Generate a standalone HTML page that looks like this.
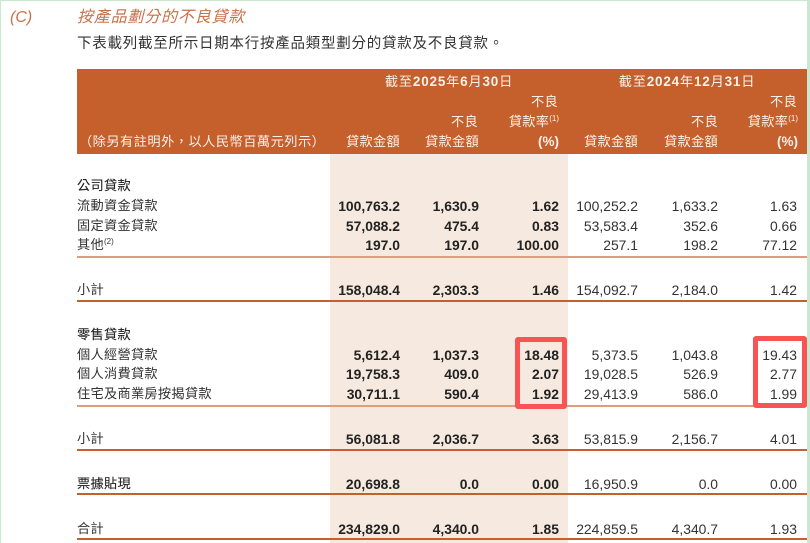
<!DOCTYPE html>
<html lang="zh-Hant">
<head>
<meta charset="utf-8">
<title>按產品劃分的不良貸款</title>
<style>
html,body{margin:0;padding:0;background:#fff}
#p{position:relative;width:810px;height:543px;overflow:hidden;background:#fff;font-family:"Liberation Sans","Noto Sans CJK TC",sans-serif;color:#2b2b2b}
#p div{position:absolute;white-space:nowrap}
.l,.h,.n,.b{height:20px;line-height:20px}
.l{left:77px;font-size:13.2px;letter-spacing:.3px;color:#333}
.bl{color:#222;-webkit-text-stroke:.1px #222}
.n,.b{width:90px;text-align:right;font-size:13.9px}
.n{color:#333}
.b{font-weight:bold;color:#222}
.c1{left:310px}.c2{left:389px}.c3{left:469px}.c4{left:548px}.c5{left:628px}.c6{left:707px}
.h{width:110px;text-align:right;color:#fbf1ea;font-size:13.2px;letter-spacing:.3px}
.ln{left:77px;width:730px}
.t{height:2px;background:#df9d80}
.k{height:2px;background:#c55f2b}
sup{font-size:8px;line-height:0;vertical-align:5px;letter-spacing:0}
.r{box-sizing:border-box;border:5px solid #f95454;border-radius:3px}
</style>
</head>
<body>
<div id="p">
<div style="left:0;top:0;width:810px;height:1px;background:#c8e8d0"></div>
<div style="left:0;top:0;width:1px;height:543px;background:#c8e8d0"></div>
<div style="left:807px;top:0;width:3px;height:543px;background:#c8e8d0"></div>

<div style="left:10px;top:8px;height:20px;line-height:20px;font-size:16px;font-style:italic;color:#c9714a">(C)</div>
<div style="left:77px;top:7px;height:22px;line-height:22px;font-size:16px;letter-spacing:.8px;font-style:italic;color:#c9714a">按產品劃分的不良貸款</div>
<div style="left:77px;top:33px;height:22px;line-height:22px;font-size:14.5px;letter-spacing:.75px;color:#333">下表載列截至所示日期本行按產品類型劃分的貸款及不良貸款。</div>

<div style="left:77px;top:69px;width:730px;height:85px;background:#c5602c"></div>
<div style="left:330px;top:154px;width:238px;height:389px;background:#f6eae0"></div>

<div class="h" style="left:359px;top:72px;width:180px;text-align:center;letter-spacing:.8px">截至<b style="font-size:13.5px">2025</b>年<b style="font-size:13.5px">6</b>月<b style="font-size:13.5px">30</b>日</div>
<div class="h" style="left:597px;top:72px;width:180px;text-align:center;letter-spacing:.8px">截至<b style="font-size:13.5px">2024</b>年<b style="font-size:13.5px">12</b>月<b style="font-size:13.5px">31</b>日</div>
<div class="h" style="left:448px;top:92px">不良</div>
<div class="h" style="left:687px;top:92px">不良</div>
<div class="h" style="left:368px;top:112px">不良</div>
<div class="h" style="left:449px;top:112px">貸款率<sup>(1)</sup></div>
<div class="h" style="left:608px;top:112px">不良</div>
<div class="h" style="left:688px;top:112px">貸款率<sup>(1)</sup></div>
<div class="h" style="left:79px;top:132px;width:250px;text-align:left;letter-spacing:.5px">（除另有註明外，以人民幣百萬元列示）</div>
<div class="h" style="left:290px;top:132px">貸款金額</div>
<div class="h" style="left:369px;top:132px">貸款金額</div>
<div class="h" style="left:449px;top:132px;letter-spacing:0;font-size:13.5px;font-weight:bold">(%)</div>
<div class="h" style="left:528px;top:132px">貸款金額</div>
<div class="h" style="left:608px;top:132px">貸款金額</div>
<div class="h" style="left:688px;top:132px;letter-spacing:0;font-size:13.5px;font-weight:bold">(%)</div>

<div class="l bl" style="top:176px">公司貸款</div>

<div class="l" style="top:196px">流動資金貸款</div>
<div class="b c1" style="top:196px">100,763.2</div><div class="b c2" style="top:196px">1,630.9</div><div class="b c3" style="top:196px">1.62</div><div class="n c4" style="top:196px">100,252.2</div><div class="n c5" style="top:196px">1,633.2</div><div class="n c6" style="top:196px">1.63</div>

<div class="l" style="top:216px">固定資金貸款</div>
<div class="b c1" style="top:216px">57,088.2</div><div class="b c2" style="top:216px">475.4</div><div class="b c3" style="top:216px">0.83</div><div class="n c4" style="top:216px">53,583.4</div><div class="n c5" style="top:216px">352.6</div><div class="n c6" style="top:216px">0.66</div>

<div class="l" style="top:235px">其他<sup>(2)</sup></div>
<div class="b c1" style="top:235px">197.0</div><div class="b c2" style="top:235px">197.0</div><div class="b c3" style="top:235px">100.00</div><div class="n c4" style="top:235px">257.1</div><div class="n c5" style="top:235px">198.2</div><div class="n c6" style="top:235px">77.12</div>

<div class="ln t" style="top:256px"></div>

<div class="l" style="top:280px">小計</div>
<div class="b c1" style="top:280px">158,048.4</div><div class="b c2" style="top:280px">2,303.3</div><div class="b c3" style="top:280px">1.46</div><div class="n c4" style="top:280px">154,092.7</div><div class="n c5" style="top:280px">2,184.0</div><div class="n c6" style="top:280px">1.42</div>

<div class="ln k" style="top:300px"></div>

<div class="l bl" style="top:325px">零售貸款</div>

<div class="l" style="top:345px">個人經營貸款</div>
<div class="b c1" style="top:345px">5,612.4</div><div class="b c2" style="top:345px">1,037.3</div><div class="b c3" style="top:345px">18.48</div><div class="n c4" style="top:345px">5,373.5</div><div class="n c5" style="top:345px">1,043.8</div><div class="n c6" style="top:345px">19.43</div>

<div class="l" style="top:364px">個人消費貸款</div>
<div class="b c1" style="top:364px">19,758.3</div><div class="b c2" style="top:364px">409.0</div><div class="b c3" style="top:364px">2.07</div><div class="n c4" style="top:364px">19,028.5</div><div class="n c5" style="top:364px">526.9</div><div class="n c6" style="top:364px">2.77</div>

<div class="l" style="top:384px">住宅及商業房按揭貸款</div>
<div class="b c1" style="top:384px">30,711.1</div><div class="b c2" style="top:384px">590.4</div><div class="b c3" style="top:384px">1.92</div><div class="n c4" style="top:384px">29,413.9</div><div class="n c5" style="top:384px">586.0</div><div class="n c6" style="top:384px">1.99</div>

<div class="ln t" style="top:405px"></div>

<div class="l" style="top:429px">小計</div>
<div class="b c1" style="top:429px">56,081.8</div><div class="b c2" style="top:429px">2,036.7</div><div class="b c3" style="top:429px">3.63</div><div class="n c4" style="top:429px">53,815.9</div><div class="n c5" style="top:429px">2,156.7</div><div class="n c6" style="top:429px">4.01</div>

<div class="ln k" style="top:449px"></div>

<div class="l bl" style="top:474px">票據貼現</div>
<div class="b c1" style="top:474px">20,698.8</div><div class="b c2" style="top:474px">0.0</div><div class="b c3" style="top:474px">0.00</div><div class="n c4" style="top:474px">16,950.9</div><div class="n c5" style="top:474px">0.0</div><div class="n c6" style="top:474px">0.00</div>

<div class="ln k" style="top:493px"></div>

<div class="l" style="top:519px">合計</div>
<div class="b c1" style="top:519px">234,829.0</div><div class="b c2" style="top:519px">4,340.0</div><div class="b c3" style="top:519px">1.85</div><div class="n c4" style="top:519px">224,859.5</div><div class="n c5" style="top:519px">4,340.7</div><div class="n c6" style="top:519px">1.93</div>

<div class="ln k" style="top:538px"></div>

<div class="r" style="left:515px;top:337px;width:52px;height:72px"></div>
<div class="r" style="left:753px;top:336px;width:54px;height:72px"></div>
</div>
</body>
</html>
